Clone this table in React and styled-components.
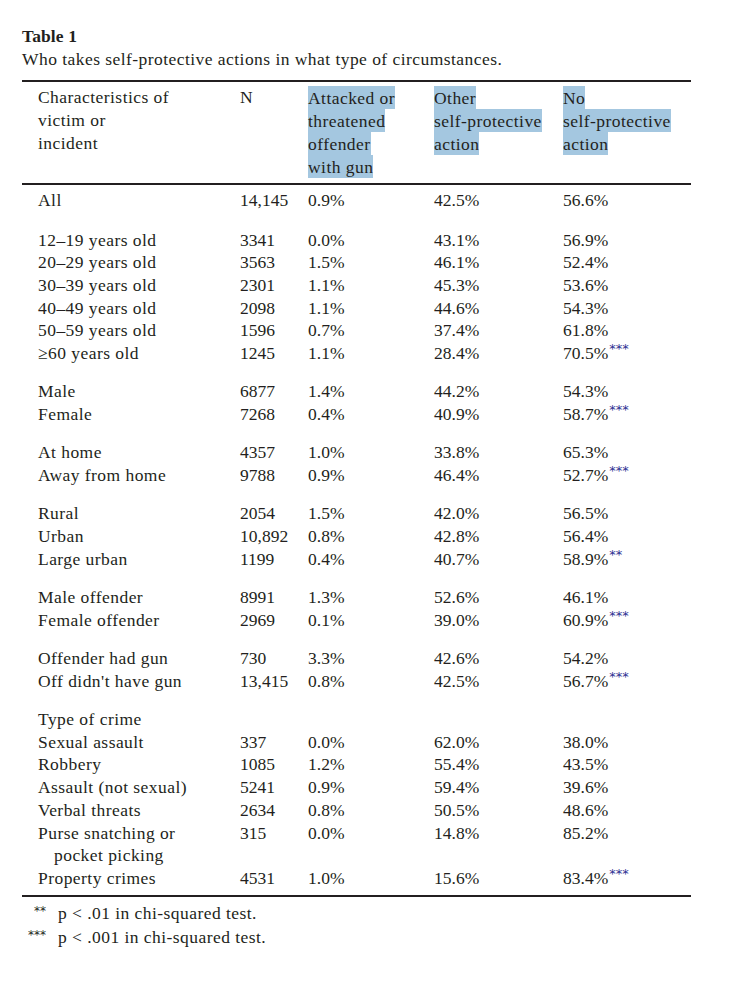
import React from 'react'
import styled, { createGlobalStyle, css } from 'styled-components'

const GlobalStyle = createGlobalStyle`
    body {
        margin: 0;
        background: #ffffff;
        color: #231f20;
        font-family: "Liberation Serif", "Times New Roman", serif;
    }
`
const Page = styled.div`
    width: 669px;
    padding: 25px 0 0 22px;
    font-size: 17.5px;
    line-height: 23px;
    letter-spacing: 0.45px;
`
const Title = styled.div`
    font-weight: bold;
    letter-spacing: 0.1px;
`
const Caption = styled.div`
    margin-bottom: 9px;
`
const Frame = styled.div`
    border-top: 2px solid #231f20;
    border-bottom: 2px solid #231f20;
`
const Table = styled.table`
    width: 100%;
    table-layout: fixed;
    border-collapse: collapse;
`
const HeadCell = styled.th`
    text-align: left;
    font-weight: normal;
    vertical-align: top;
    padding: 4px 0 4.5px 0;
    line-height: 23px;
    border-bottom: 2px solid #231f20;
    ${props => props.$first && css`
        padding-left: 16px;
    `}
`
const Mark = styled.span`
    background: #a4c7e0;
    padding: 1.5px 0;
    box-decoration-break: clone;
    -webkit-box-decoration-break: clone;
`
const Cell = styled.td`
    vertical-align: top;
    padding: 0;
    line-height: 22.7px;
    padding-top: ${props => props.$gap || 0}px;
    padding-bottom: ${props => props.$end ? 5 : 0}px;
    ${props => props.$first && css`
        padding-left: 16px;
    `}
    ${props => props.$num && css`
        letter-spacing: 0;
    `}
`
const Continued = styled.div`
    padding-left: 16px;
`
const Stars = styled.span`
    color: #2e3192;
    font-family: "DejaVu Sans", sans-serif;
    font-size: 13px;
    letter-spacing: 0;
    line-height: 0;
    vertical-align: 6px;
    margin-left: 1px;
`
const Notes = styled.div`
    padding-top: 4.5px;
`
const Note = styled.div`
    display: flex;
    line-height: 24px;
`
const NoteMark = styled.span`
    width: 24px;
    text-align: right;
    font-family: "DejaVu Sans", sans-serif;
    font-size: 12px;
    letter-spacing: 0;
    line-height: 0;
    position: relative;
    top: 10px;
`
const NoteText = styled.span`
    margin-left: 12px;
`

const groups = [
    [['All', '14,145', '0.9%', '42.5%', '56.6%']],
    [
        ['12–19 years old', '3341', '0.0%', '43.1%', '56.9%'],
        ['20–29 years old', '3563', '1.5%', '46.1%', '52.4%'],
        ['30–39 years old', '2301', '1.1%', '45.3%', '53.6%'],
        ['40–49 years old', '2098', '1.1%', '44.6%', '54.3%'],
        ['50–59 years old', '1596', '0.7%', '37.4%', '61.8%'],
        ['≥60 years old', '1245', '1.1%', '28.4%', '70.5%', '***'],
    ],
    [
        ['Male', '6877', '1.4%', '44.2%', '54.3%'],
        ['Female', '7268', '0.4%', '40.9%', '58.7%', '***'],
    ],
    [
        ['At home', '4357', '1.0%', '33.8%', '65.3%'],
        ['Away from home', '9788', '0.9%', '46.4%', '52.7%', '***'],
    ],
    [
        ['Rural', '2054', '1.5%', '42.0%', '56.5%'],
        ['Urban', '10,892', '0.8%', '42.8%', '56.4%'],
        ['Large urban', '1199', '0.4%', '40.7%', '58.9%', '**'],
    ],
    [
        ['Male offender', '8991', '1.3%', '52.6%', '46.1%'],
        ['Female offender', '2969', '0.1%', '39.0%', '60.9%', '***'],
    ],
    [
        ['Offender had gun', '730', '3.3%', '42.6%', '54.2%'],
        ["Off didn't have gun", '13,415', '0.8%', '42.5%', '56.7%', '***'],
    ],
    [
        ['Type of crime', '', '', '', ''],
        ['Sexual assault', '337', '0.0%', '62.0%', '38.0%'],
        ['Robbery', '1085', '1.2%', '55.4%', '43.5%'],
        ['Assault (not sexual)', '5241', '0.9%', '59.4%', '39.6%'],
        ['Verbal threats', '2634', '0.8%', '50.5%', '48.6%'],
        [['Purse snatching or', 'pocket picking'], '315', '0.0%', '14.8%', '85.2%'],
        ['Property crimes', '4531', '1.0%', '15.6%', '83.4%', '***'],
    ],
]

const Row = ({ row, gap, end }) => {
    const [label, n, gun, other, none, stars] = row
    return (
        <tr>
            <Cell $first $gap={gap} $end={end}>
                {Array.isArray(label) ? (
                    <>
                        {label[0]}
                        <Continued>{label[1]}</Continued>
                    </>
                ) : label}
            </Cell>
            <Cell $num $gap={gap} $end={end}>{n}</Cell>
            <Cell $num $gap={gap} $end={end}>{gun}</Cell>
            <Cell $num $gap={gap} $end={end}>{other}</Cell>
            <Cell $num $gap={gap} $end={end}>
                {none}
                {stars && <Stars>{stars}</Stars>}
            </Cell>
        </tr>
    )
}

export default function App() {
    return (
        <Page>
            <GlobalStyle />
            <Title>Table 1</Title>
            <Caption>Who takes self-protective actions in what type of circumstances.</Caption>
            <Frame>
                <Table>
                    <colgroup>
                        <col style={{ width: 218 }} />
                        <col style={{ width: 68 }} />
                        <col style={{ width: 126 }} />
                        <col style={{ width: 129 }} />
                        <col />
                    </colgroup>
                    <thead>
                        <tr>
                            <HeadCell $first>Characteristics of<br />victim or<br />incident</HeadCell>
                            <HeadCell>N</HeadCell>
                            <HeadCell><Mark>Attacked or<br />threatened<br />offender<br />with gun</Mark></HeadCell>
                            <HeadCell><Mark>Other<br />self-protective<br />action</Mark></HeadCell>
                            <HeadCell><Mark>No<br />self-protective<br />action</Mark></HeadCell>
                        </tr>
                    </thead>
                    <tbody>
                        {groups.map((group, gi) =>
                            group.map((row, ri) => (
                                <Row
                                    key={`${gi}-${ri}`}
                                    row={row}
                                    gap={ri === 0 ? (gi === 0 ? 4 : gi === 1 ? 17.3 : 15.6) : 0}
                                    end={gi === groups.length - 1 && ri === group.length - 1}
                                />
                            ))
                        )}
                    </tbody>
                </Table>
            </Frame>
            <Notes>
                <Note><NoteMark>**</NoteMark><NoteText>p &lt; .01 in chi-squared test.</NoteText></Note>
                <Note><NoteMark>***</NoteMark><NoteText>p &lt; .001 in chi-squared test.</NoteText></Note>
            </Notes>
        </Page>
    )
}
